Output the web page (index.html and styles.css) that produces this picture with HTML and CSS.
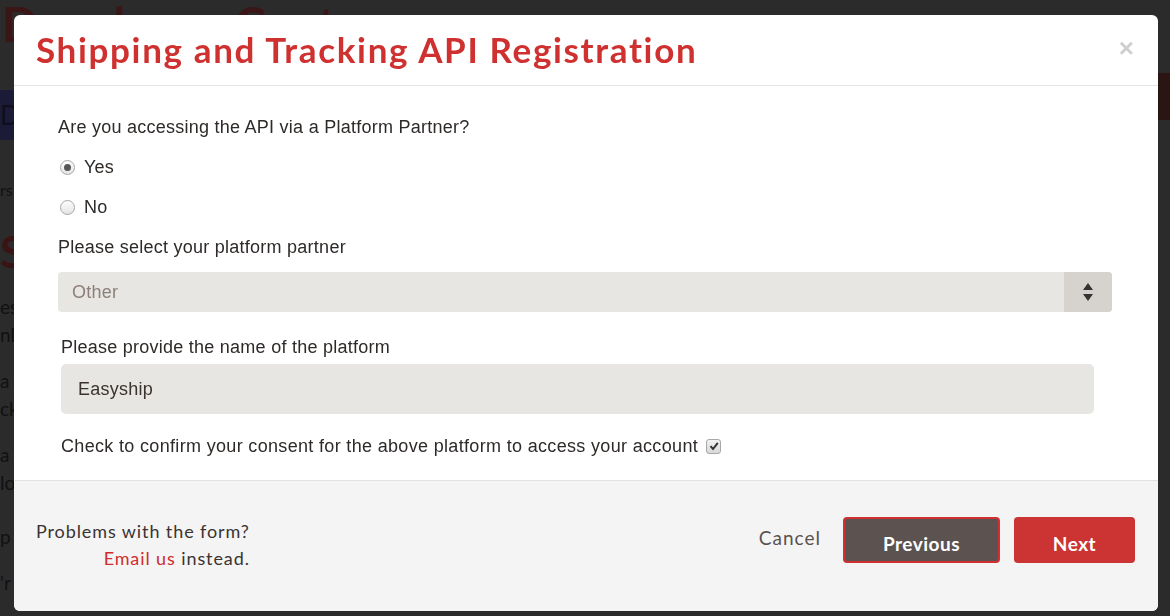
FILE: index.html
```html
<!DOCTYPE html>
<html>
<head>
<meta charset="utf-8">
<title>Shipping and Tracking API Registration</title>
<link rel="stylesheet" href="styles.css">
</head>
<body>
<div class="page">
  <h1 class="page-title">Developer Centre</h1>
  <div class="page-nav">
    <span class="nav-main">Do</span>
    <span class="nav-side"></span>
  </div>
  <div class="page-body">
    <p class="crumbs">rs</p>
    <h2 class="page-head">S</h2>
    <p class="line">es</p>
    <p class="line">nly</p>
    <p class="line gap">a</p>
    <p class="line">ck</p>
    <p class="line gap">a</p>
    <p class="line">lo</p>
    <p class="line gap2">p</p>
    <p class="line gap">'r</p>
  </div>
</div>

<div class="modal">
  <div class="modal-header">
    <h3 class="modal-title">Shipping and Tracking API Registration</h3>
    <span class="close">&times;</span>
  </div>

  <div class="modal-body">
    <p class="question">Are you accessing the API via a Platform Partner?</p>
    <label class="radio"><span class="radio-dot on"></span>Yes</label>
    <label class="radio"><span class="radio-dot"></span>No</label>

    <p class="field-label">Please select your platform partner</p>
    <div class="select">
      <span class="select-value">Other</span>
      <span class="select-arrow">
        <svg width="12" height="20" viewBox="0 0 12 20"><path d="M6 1 L11 8 L1 8 Z M6 19 L11 12 L1 12 Z" fill="#333"/></svg>
      </span>
    </div>

    <div class="sub-group">
      <p class="field-label">Please provide the name of the platform</p>
      <div class="text-input">Easyship</div>
      <p class="consent">Check to confirm your consent for the above platform to access your account
        <span class="checkbox"><svg width="10" height="10" viewBox="0 0 10 10"><path d="M1.5 5.2 L4 8 L8.8 1.8" stroke="#333" stroke-width="2" fill="none"/></svg></span>
      </p>
    </div>
  </div>

  <div class="modal-footer">
    <div class="help">
      Problems with the form?<br>
      <a href="#" class="email">Email us</a> instead.
    </div>
    <div class="actions">
      <a href="#" class="cancel">Cancel</a>
      <a href="#" class="btn btn-prev">Previous</a>
      <a href="#" class="btn btn-next">Next</a>
    </div>
  </div>
</div>
</body>
</html>
```

FILE: styles.css
```css
* { margin: 0; padding: 0; box-sizing: border-box; text-decoration: none; }
html, body { height: 100%; overflow: hidden; }
body { background: #2b2b2b; font-family: "Liberation Sans", Arial, sans-serif; }

/* dimmed page behind the dialog */
.page { color: #111; font-family: Lato, sans-serif; }
.page-title { font-size: 48px; line-height: 44px; color: #3a1616; font-weight: 700; padding: 2px 0 0 2px; white-space: nowrap; }
.page-nav { display: flex; justify-content: space-between; margin-top: 44px; height: 50px; }
.nav-main { width: 300px; background: #1b1b38; color: #0e0e1c; font-size: 26px; line-height: 50px; }
.nav-side { width: 200px; background: #2a1414; margin-top: -17px; height: 47px; }
.page-body { padding-top: 40px; }
.crumbs { font-size: 16px; }
.page-head { font-size: 44px; color: #3a1414; margin: 26px 0 16px; }
.line { font-size: 19px; line-height: 28px; white-space: nowrap; }
.gap { margin-top: 18px; }
.gap2 { margin-top: 26px; }

/* dialog */
.modal { position: fixed; left: 14px; top: 15px; width: 1144px; height: 596px; background: #fff; border-radius: 6px; display: flex; flex-direction: column; overflow: hidden; }
.modal-header { height: 71px; border-bottom: 1px solid #e5e5e5; display: flex; align-items: center; justify-content: space-between; padding: 0 24px 0 22px; }
.modal-title { font-family: Lato, sans-serif; font-weight: 700; font-size: 35px; color: #cf3030; letter-spacing: 1.65px; margin-top: -2px; white-space: nowrap; }
.close { font-size: 26px; font-weight: 700; color: #cfcfcf; margin-top: -4px; }

.modal-body { padding: 31px 46px 0 44px; color: #2e2a28; font-size: 18px; letter-spacing: 0.25px; flex: 1; }
.question { line-height: 20px; margin-bottom: 20px; }
.radio { display: flex; align-items: center; height: 20px; margin-bottom: 20px; }
.radio-dot { width: 15px; height: 15px; border-radius: 50%; border: 1px solid #a8a8a8; background: linear-gradient(#fdfdfd, #e4e4e4); margin: 0 9px 0 2px; display: flex; align-items: center; justify-content: center; }
.radio-dot.on::after { content: ""; width: 7px; height: 7px; border-radius: 50%; background: #555; }
.field-label { line-height: 20px; margin-top: 2px; }
.select { margin-top: 15px; height: 40px; background: #e8e6e2; border-radius: 4px; display: flex; justify-content: space-between; overflow: hidden; }
.select-value { color: #8d8079; line-height: 40px; padding-left: 14px; }
.select-arrow { width: 48px; background: #d6d3ce; display: flex; align-items: center; justify-content: center; }

.sub-group { margin: 25px 18px 0 3px; }
.text-input { margin-top: 7px; height: 50px; background: #e8e6e2; border-radius: 5px; line-height: 50px; padding-left: 17px; color: #3a3330; }
.consent { margin-top: 22px; line-height: 20px; display: flex; align-items: center; gap: 8px; letter-spacing: 0.33px; white-space: nowrap; }
.checkbox { width: 15px; height: 15px; border: 1px solid #a8a8a8; border-radius: 3px; background: linear-gradient(#f2f2f2, #d8d8d8); display: flex; align-items: center; justify-content: center; }

.modal-footer { height: 131px; background: #f4f4f4; border-top: 1px solid #e2e2e2; display: flex; justify-content: space-between; align-items: center; padding: 0 23px 0 22px; font-family: Lato, sans-serif; }
.help { font-size: 18px; letter-spacing: 0.9px; line-height: 27px; color: #3b3331; text-align: right; margin-top: -2px; }
.email { color: #cf2d2d; }
.actions { display: flex; align-items: center; margin-bottom: 12px; }
.cancel { color: #5a5250; font-size: 19px; letter-spacing: 1px; margin-right: 22px; margin-bottom: 6px; }
.btn { height: 46px; border-radius: 4px; color: #fff; font-weight: 700; font-size: 19px; letter-spacing: 0.5px; display: flex; align-items: center; justify-content: center; padding-top: 6px; }
.btn-prev { width: 157px; background: #5c5350; border: 2px solid #d03031; margin-right: 14px; }
.btn-next { width: 121px; background: #cc3333; }
```
